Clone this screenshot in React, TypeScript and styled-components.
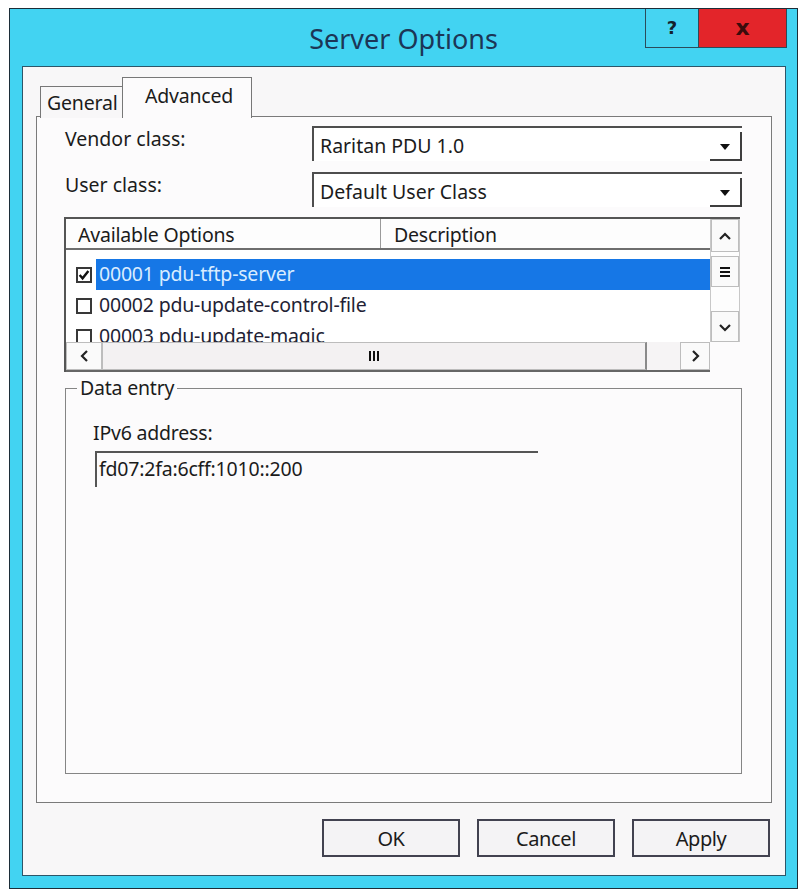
import React from "react";
import styled, { createGlobalStyle } from "styled-components";

const Global = createGlobalStyle`
  html, body { margin: 0; padding: 0; background: #ffffff; }
  body { font-family: "Noto Sans", "Open Sans", sans-serif; color: #1b1b1b; }
  * { box-sizing: border-box; }
`;

const Window = styled.div`
  margin: 8px 0 0 9px;
  width: 789px;
  height: 881px;
  border: 1px solid #1c2d38;
  background: #42d3f2;
  display: flex;
  flex-direction: column;
`;

const TitleBar = styled.div`
  height: 57px;
  flex: none;
  display: grid;
  grid-template-columns: 1fr auto 1fr;
  padding: 0 10px;
`;

const Title = styled.div`
  grid-column: 2;
  align-self: center;
  font-size: 27px;
  letter-spacing: 0;
  color: #1c3656;
  padding-top: 2px;
`;

const CaptionButtons = styled.div`
  grid-column: 3;
  justify-self: end;
  align-self: start;
  display: flex;
`;

const CaptionButton = styled.div<{ $close?: boolean }>`
  width: ${(p) => (p.$close ? 88 : 54)}px;
  height: 39px;
  border: 1px solid #2b4b5a;
  border-top: none;
  ${(p) => (p.$close ? "border-left: none;" : "")}
  background: ${(p) => (p.$close ? "#e3252a" : "#46d4f2")};
  color: ${(p) => (p.$close ? "#3a0c0c" : "#14222c")};
  font-weight: 700;
  font-size: ${(p) => (p.$close ? 22 : 18)}px;
  font-family: "DejaVu Sans", sans-serif;
  display: flex;
  align-items: center;
  justify-content: center;
  line-height: 1;
`;

const Client = styled.div`
  flex: 1;
  margin: 0 11px 12px 12px;
  background: #f8f7f8;
  border: 1px solid #2d5669;
  padding: 12px 13px 16px 13px;
  display: flex;
  flex-direction: column;
`;

const TabStrip = styled.div`
  height: 39px;
  flex: none;
  display: flex;
  align-items: flex-end;
  padding-left: 4px;
  margin-bottom: -2px;
`;

const Tab = styled.div<{ $active?: boolean }>`
  position: relative;
  z-index: ${(p) => (p.$active ? 2 : 1)};
  width: ${(p) => (p.$active ? 130 : 83)}px;
  height: ${(p) => (p.$active ? 41 : 32)}px;
  padding: ${(p) => (p.$active ? "6px 0 0 22px" : "4px 0 0 6px")};
  border: 1px solid #777;
  border-bottom: none;
  ${(p) => (p.$active ? "margin-left: -1px;" : "")}
  background: ${(p) => (p.$active ? "#fcfbfc" : "#f8f7f8")};
  font-size: 19.5px;
  letter-spacing: -0.2px;
  line-height: 24px;
  white-space: nowrap;
`;

const Panel = styled.div`
  height: 687px;
  flex: none;
  border: 1px solid #7a7a7a;
  background: #fcfbfc;
  padding: 9px 29px 0 27px;
  display: flex;
  flex-direction: column;
`;

const FieldRow = styled.div<{ $gap?: number }>`
  display: flex;
  align-items: center;
  height: 35px;
  margin-top: ${(p) => p.$gap ?? 0}px;
`;

const Label = styled.div`
  flex: 0 0 248px;
  padding-left: 1px;
  padding-bottom: 10px;
  font-size: 19.5px;
  letter-spacing: 0;
`;

const Combo = styled.div`
  flex: 1;
  height: 100%;
  display: flex;
  background: #ffffff;
  border-top: 2px solid #4e4e4e;
  border-left: 2px solid #4e4e4e;
`;

const ComboText = styled.div`
  flex: 1;
  padding: 4px 0 0 6px;
  font-size: 19.5px;
  letter-spacing: 0;
  line-height: 28px;
`;

const ComboArrow = styled.div`
  flex: 0 0 32px;
  margin-top: 4px;
  border-right: 2px solid #3e3e3e;
  border-bottom: 2px solid #3e3e3e;
  display: flex;
  align-items: center;
  justify-content: center;
  padding-top: 3px;
`;

const ListBox = styled.div`
  margin-top: 10px;
  margin-right: 2px;
  height: 155px;
  flex: none;
  display: grid;
  grid-template-columns: 1fr 30px;
  grid-template-rows: 1fr 30px;
  border-top: 2px solid #555;
  border-left: 2px solid #555;
`;

const ListContent = styled.div`
  background: #ffffff;
  overflow: hidden;
`;

const HeaderRow = styled.div`
  height: 31px;
  display: grid;
  grid-template-columns: 315px 1fr;
  border-bottom: 2px solid #6e6e6e;
  background: #fdfdfd;
`;

const HeaderCell = styled.div<{ $last?: boolean }>`
  padding: 3px 0 0 ${(p) => (p.$last ? 13 : 12)}px;
  font-size: 19.5px;
  letter-spacing: -0.2px;
  line-height: 26px;
  white-space: nowrap;
  ${(p) => (p.$last ? "" : "border-right: 1px solid #9a9a9a;")}
`;

const Rows = styled.div`
  padding-top: 9px;
`;

const Row = styled.div`
  height: 31px;
  display: flex;
  align-items: center;
  padding-left: 10px;
`;

const Check = styled.div`
  width: 16px;
  height: 16px;
  flex: none;
  border: 2px solid #383838;
  background: #fff;
  display: flex;
  align-items: center;
  justify-content: center;
`;

const ItemText = styled.div<{ $selected?: boolean }>`
  flex: 1;
  height: 31px;
  margin-left: 4px;
  padding-left: 3px;
  font-size: 19.5px;
  letter-spacing: -0.2px;
  line-height: 30px;
  white-space: nowrap;
  background: ${(p) => (p.$selected ? "#1677e6" : "transparent")};
  color: ${(p) => (p.$selected ? "#d9ecff" : "#231f35")};
`;

const VScroll = styled.div`
  display: flex;
  flex-direction: column;
  background: #fdfdfd;
  border-left: 1px solid #c8c8c8;
  border-right: 1px solid #c8c8c8;
`;

const ScrollBtn = styled.div<{ $h?: number; $w?: number }>`
  ${(p) => (p.$h ? `height: ${p.$h}px;` : "")}
  ${(p) => (p.$w ? `width: ${p.$w}px;` : "")}
  flex: none;
  display: flex;
  align-items: center;
  justify-content: center;
  background: #fafafa;
  border: 1px solid #bdbdbd;
`;

const Spacer = styled.div<{ $h?: number; $grow?: boolean }>`
  ${(p) => (p.$h ? `height: ${p.$h}px;` : "")}
  ${(p) => (p.$grow ? "flex: 1;" : "flex: none;")}
`;

const HScroll = styled.div`
  display: flex;
  background: #f6f4f5;
  border-bottom: 2px solid #666;
`;

const HThumb = styled.div`
  flex: 0 0 545px;
  display: flex;
  align-items: center;
  justify-content: center;
  background: #f3f1f2;
  border: 1px solid #bcbcbc;
  border-right: 2px solid #8a8a8a;
`;

const Corner = styled.div`
  background: #fcfbfc;
`;

const Group = styled.fieldset`
  margin: 5px 0 0 1px;
  padding: 0 0 0 26px;
  height: 397px;
  flex: none;
  border: 1px solid #858585;
  display: flex;
  flex-direction: column;
  min-width: 0;
`;

const Legend = styled.legend`
  margin-left: -15px;
  padding: 0 3px;
  font-size: 19.5px;
  letter-spacing: -0.2px;
  line-height: 22px;
`;

const FieldLabel = styled.div`
  margin-top: 21px;
  padding-left: 1px;
  font-size: 19.5px;
  letter-spacing: -0.2px;
  line-height: 26px;
`;

const TextInput = styled.div`
  margin-top: 5px;
  margin-left: 3px;
  width: 443px;
  height: 36px;
  border-top: 2px solid #555;
  border-left: 2px solid #555;
  padding: 2px 0 0 2px;
  font-size: 19.5px;
  letter-spacing: -0.2px;
  line-height: 28px;
`;

const ButtonRow = styled.div`
  margin-top: 16px;
  display: flex;
  justify-content: flex-end;
  gap: 17px;
  padding-right: 2px;
`;

const DialogButton = styled.div`
  width: 138px;
  height: 38px;
  border: 2px solid #424250;
  background: #f4f3f5;
  display: flex;
  align-items: center;
  justify-content: center;
  font-size: 20px;
  letter-spacing: -0.4px;
`;

const Chevron = ({ dir }: { dir: "up" | "down" | "left" | "right" }) => {
  const pts = {
    up: "1,9 6,4 11,9",
    down: "1,4 6,9 11,4",
    left: "9,1 4,6 9,11",
    right: "4,1 9,6 4,11",
  }[dir];
  return (
    <svg width="12" height="12" viewBox="0 0 12 12">
      <polyline points={pts} fill="none" stroke="#222" strokeWidth="2.2" />
    </svg>
  );
};

const DownTriangle = () => (
  <svg width="12" height="8" viewBox="0 0 12 8">
    <polygon points="1,1 11,1 6,7" fill="#111" />
  </svg>
);

const CheckMark = () => (
  <svg width="12" height="12" viewBox="0 0 11 11">
    <polyline points="1.5,5.5 4.2,8.5 9.5,1.8" fill="none" stroke="#111" strokeWidth="2.2" />
  </svg>
);

const Grip = ({ vertical }: { vertical?: boolean }) =>
  vertical ? (
    <svg width="12" height="12" viewBox="0 0 12 12">
      <rect x="1" y="1" width="10" height="2" fill="#111" />
      <rect x="1" y="5" width="10" height="2" fill="#111" />
      <rect x="1" y="9" width="10" height="2" fill="#111" />
    </svg>
  ) : (
    <svg width="12" height="12" viewBox="0 0 12 12">
      <rect x="1" y="1" width="2" height="10" fill="#111" />
      <rect x="5" y="1" width="2" height="10" fill="#111" />
      <rect x="9" y="1" width="2" height="10" fill="#111" />
    </svg>
  );

const items = [
  { id: "00001 pdu-tftp-server", checked: true, selected: true },
  { id: "00002 pdu-update-control-file", checked: false, selected: false },
  { id: "00003 pdu-update-magic", checked: false, selected: false },
];

export default function App() {
  return (
    <>
      <Global />
      <Window>
        <TitleBar>
          <Title>Server Options</Title>
          <CaptionButtons>
            <CaptionButton>?</CaptionButton>
            <CaptionButton $close>x</CaptionButton>
          </CaptionButtons>
        </TitleBar>
        <Client>
          <TabStrip>
            <Tab>General</Tab>
            <Tab $active>Advanced</Tab>
          </TabStrip>
          <Panel>
            <FieldRow>
              <Label>Vendor class:</Label>
              <Combo>
                <ComboText>Raritan PDU 1.0</ComboText>
                <ComboArrow>
                  <DownTriangle />
                </ComboArrow>
              </Combo>
            </FieldRow>
            <FieldRow $gap={11}>
              <Label>User class:</Label>
              <Combo>
                <ComboText>Default User Class</ComboText>
                <ComboArrow>
                  <DownTriangle />
                </ComboArrow>
              </Combo>
            </FieldRow>
            <ListBox>
              <ListContent>
                <HeaderRow>
                  <HeaderCell>Available Options</HeaderCell>
                  <HeaderCell $last>Description</HeaderCell>
                </HeaderRow>
                <Rows>
                  {items.map((it) => (
                    <Row key={it.id}>
                      <Check>{it.checked && <CheckMark />}</Check>
                      <ItemText $selected={it.selected}>{it.id}</ItemText>
                    </Row>
                  ))}
                </Rows>
              </ListContent>
              <VScroll>
                <ScrollBtn $h={33}>
                  <Chevron dir="up" />
                </ScrollBtn>
                <Spacer $h={4} />
                <ScrollBtn $h={31}>
                  <Grip vertical />
                </ScrollBtn>
                <Spacer $grow />
                <ScrollBtn $h={31}>
                  <Chevron dir="down" />
                </ScrollBtn>
              </VScroll>
              <HScroll>
                <ScrollBtn $w={36}>
                  <Chevron dir="left" />
                </ScrollBtn>
                <HThumb>
                  <Grip />
                </HThumb>
                <Spacer $grow />
                <ScrollBtn $w={30}>
                  <Chevron dir="right" />
                </ScrollBtn>
              </HScroll>
              <Corner />
            </ListBox>
            <Group>
              <Legend>Data entry</Legend>
              <FieldLabel>IPv6 address:</FieldLabel>
              <TextInput>fd07:2fa:6cff:1010::200</TextInput>
            </Group>
          </Panel>
          <ButtonRow>
            <DialogButton>OK</DialogButton>
            <DialogButton>Cancel</DialogButton>
            <DialogButton>Apply</DialogButton>
          </ButtonRow>
        </Client>
      </Window>
    </>
  );
}
